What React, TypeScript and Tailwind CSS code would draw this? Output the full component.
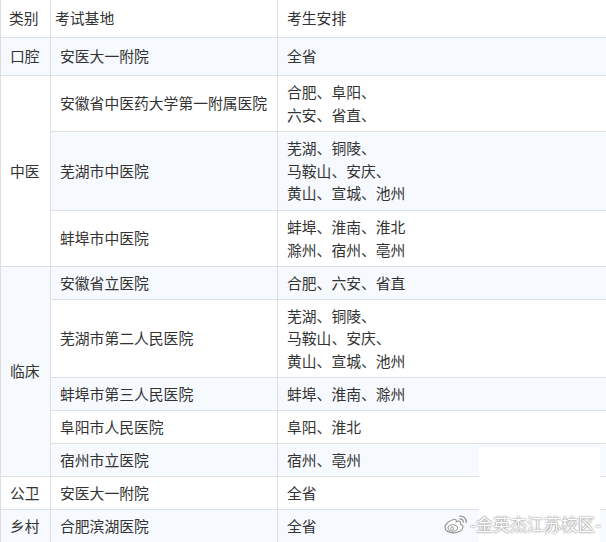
import React from "react";

type Row = {
  cat?: string;
  catSpan?: number;
  catBlue?: boolean;
  base: string;
  arr: string[];
  h: number;
  blue: boolean;
};

const rows: Row[] = [
  { cat: "口腔", base: "安医大一附院", arr: ["全省"], h: 37, blue: true },
  { cat: "中医", catSpan: 3, catBlue: false, base: "安徽省中医药大学第一附属医院", arr: ["合肥、阜阳、", "六安、省直、"], h: 55, blue: false },
  { base: "芜湖市中医院", arr: ["芜湖、铜陵、", "马鞍山、安庆、", "黄山、宣城、池州"], h: 78, blue: true },
  { base: "蚌埠市中医院", arr: ["蚌埠、淮南、淮北", "滁州、宿州、亳州"], h: 55, blue: false },
  { cat: "临床", catSpan: 5, catBlue: true, base: "安徽省立医院", arr: ["合肥、六安、省直"], h: 32, blue: true },
  { base: "芜湖市第二人民医院", arr: ["芜湖、铜陵、", "马鞍山、安庆、", "黄山、宣城、池州"], h: 77, blue: false },
  { base: "蚌埠市第三人民医院", arr: ["蚌埠、淮南、滁州"], h: 32, blue: true },
  { base: "阜阳市人民医院", arr: ["阜阳、淮北"], h: 32, blue: false },
  { base: "宿州市立医院", arr: ["宿州、亳州"], h: 32, blue: true },
  { cat: "公卫", base: "安医大一附院", arr: ["全省"], h: 32, blue: false },
  { cat: "乡村", base: "合肥滨湖医院", arr: ["全省"], h: 33, blue: true },
];

function WeiboLogo() {
  return (
    <svg width="26" height="20" viewBox="0 0 26 20" fill="none">
      <path
        d="M10.5 5.5C6.5 6.5 2 10 2 13.5C2 16.8 6 18.8 10.5 18.8C16 18.8 20 15.8 20 13C20 11.2 18.3 10.6 17.3 10.3C17.8 9 17.8 7.6 16.3 7.3C15 7 13.3 7.8 13.3 7.8C13.6 6.2 13 4.8 10.5 5.5Z"
        fill="white"
        stroke="#9a9a9a"
        strokeWidth="1.2"
      />
      <ellipse cx="9.8" cy="14" rx="4.8" ry="3.3" stroke="#9a9a9a" strokeWidth="1.1" fill="white" />
      <circle cx="9.2" cy="14.4" r="1.5" stroke="#9a9a9a" strokeWidth="1" />
      <path d="M17 2.2C20.5 1.8 23.6 4.6 23.2 8.4" stroke="#9a9a9a" strokeWidth="1.4" strokeLinecap="round" />
      <path d="M17 5C18.8 4.8 20.6 6.2 20.3 8" stroke="#9a9a9a" strokeWidth="1.3" strokeLinecap="round" />
    </svg>
  );
}

export default function App() {
  const font = { fontFamily: '"Noto Sans CJK SC", "Noto Sans", sans-serif' };
  const rowTemplate = ["37px", ...rows.map((r) => `${r.h}px`)].join(" ");
  return (
    <div className="relative w-[606px] h-[542px] overflow-hidden bg-white text-[#333] text-[14.8px]" style={font}>
      <div
        className="grid grid-cols-[49px_226px_1fr] gap-px bg-[#dcdfe4] border-l border-[#dcdfe4]"
        style={{ gridTemplateRows: rowTemplate }}
      >
        <div className="bg-white flex items-center pl-[8px]">类别</div>
        <div className="bg-white flex items-center pl-[4px]">考试基地</div>
        <div className="bg-white flex items-center pl-[9px]">考生安排</div>
        {rows.map((r, i) => {
          const bg = r.blue ? "bg-[#f6f9fe]" : "bg-white";
          return (
            <React.Fragment key={i}>
              {r.cat && (
                <div
                  className={`${r.catSpan ? (r.catBlue ? "bg-[#f6f9fe]" : "bg-white") : bg} flex items-center pl-[9px]`}
                  style={r.catSpan ? { gridRow: `span ${r.catSpan} / span ${r.catSpan}` } : undefined}
                >
                  {r.cat}
                </div>
              )}
              <div className={`${bg} flex items-center pl-[9px]`}>{r.base}</div>
              <div className={`${bg} flex flex-col justify-center pl-[9px] leading-[22.5px]`}>
                {r.arr.map((t, j) => (
                  <div key={j}>{t}</div>
                ))}
              </div>
            </React.Fragment>
          );
        })}
      </div>
      <div className="absolute left-[479px] top-[447px] w-[121px] h-[95px] bg-white" />
      <div className="absolute left-[443px] top-[514px]">
        <WeiboLogo />
      </div>
      <div className="absolute left-[470px] top-[512px] text-[17px] leading-[24px] text-white [text-shadow:0_0_2px_#777,0_0_1px_#999]">
        -金英杰江苏校区-
      </div>
    </div>
  );
}
